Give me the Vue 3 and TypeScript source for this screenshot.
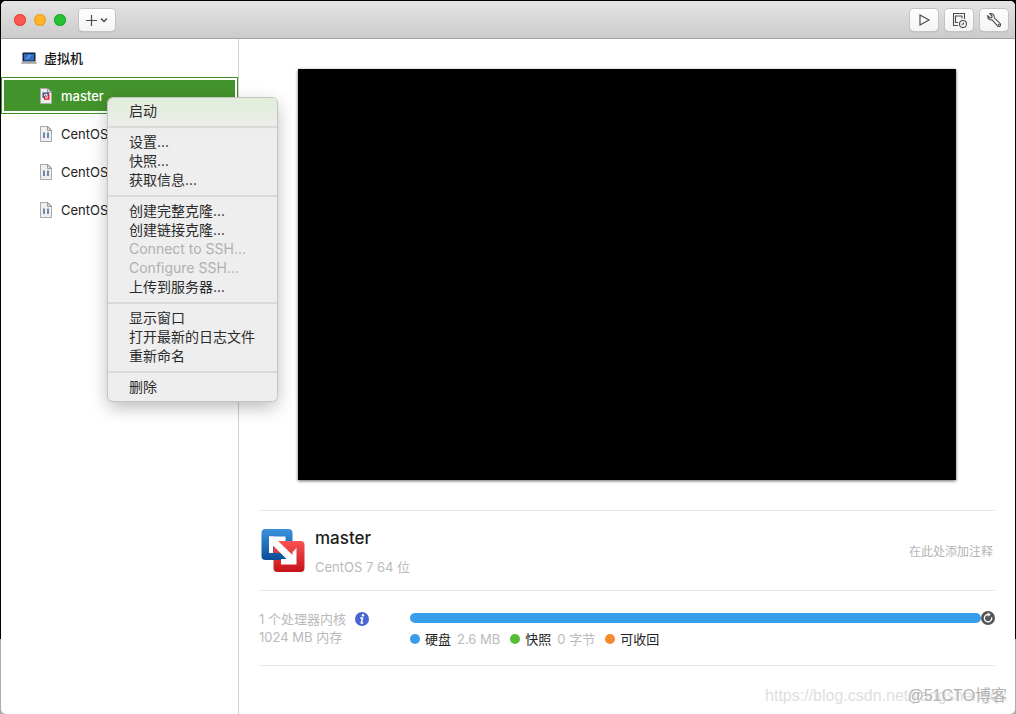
<script setup lang="ts">
import { ref } from 'vue'

interface MenuItem { label: string; disabled?: boolean }
interface Machine { name: string }
interface Legend { label: string; value: string; tone: string }

const machines: Machine[] = [
  { name: 'master' },
  { name: 'CentOS 7' },
  { name: 'CentOS 7' },
  { name: 'CentOS 7' },
]
const selected = ref(0)

const menuGroups: MenuItem[][] = [
  [{ label: '启动' }],
  [{ label: '设置...' }, { label: '快照...' }, { label: '获取信息...' }],
  [
    { label: '创建完整克隆...' },
    { label: '创建链接克隆...' },
    { label: 'Connect to SSH...', disabled: true },
    { label: 'Configure SSH...', disabled: true },
    { label: '上传到服务器...' },
  ],
  [{ label: '显示窗口' }, { label: '打开最新的日志文件' }, { label: '重新命名' }],
  [{ label: '删除' }],
]

const legend: Legend[] = [
  { label: '硬盘', value: '2.6 MB', tone: 'blue' },
  { label: '快照', value: '0 字节', tone: 'green' },
  { label: '可收回', value: '', tone: 'orange' },
]
</script>

<template>
  <div class="desktop">
    <div class="window">
      <header class="toolbar">
        <div class="lights">
          <button class="light close" aria-label="关闭"></button>
          <button class="light minimize" aria-label="最小化"></button>
          <button class="light zoom" aria-label="缩放"></button>
        </div>
        <button class="tool add" aria-label="添加">
          <svg width="26" height="14" viewBox="0 0 26 14" fill="none" stroke="#4d4d4d">
            <path d="M2 7.500h11M7.500 2v11" stroke-width="1.200" />
            <path d="M17 5.500l3 3 3-3" stroke-width="1.500" />
          </svg>
        </button>
        <div class="spacer"></div>
        <button class="tool" aria-label="启动">
          <svg width="16" height="16" viewBox="0 0 16 16" fill="none" stroke="#4d4d4d" stroke-width="1.2">
            <path d="M4 3v10l9-5z" />
          </svg>
        </button>
        <button class="tool" aria-label="快照">
          <svg width="16" height="16" viewBox="0 0 16 16" fill="none" stroke="#4d4d4d" stroke-width="1.1">
            <path d="M7 13.500H2.500V1.500h11V7" />
            <path d="M7 10.500H4.500v-6.500h6.500V6.500" />
            <circle cx="12" cy="12" r="3.500" />
            <path d="M12.500 10.500v1.700H10.500" stroke-width="1" />
          </svg>
        </button>
        <button class="tool" aria-label="设置">
          <svg width="16" height="16" viewBox="0 0 16 16" fill="none" stroke="#4d4d4d" stroke-width="1.1" stroke-linejoin="round">
            <path d="M3.700 1.600L6.100 4l-.4 1.600-1.600.4L1.700 3.700C1.400 6.300 3.100 8.300 6.100 7.900l5.200 5.800c.8.900 2 1.100 2.800.3s.6-2-.3-2.800L8.200 5.800C8.800 2.900 6.300.9 3.700 1.600z" />
            <circle cx="12.700" cy="12.600" r=".4" />
          </svg>
        </button>
      </header>

      <div class="body">
        <aside class="sidebar">
          <h2 class="library">
            <svg width="16" height="12" viewBox="0 0 16 12">
              <rect x="1.500" y=".5" width="13" height="9" rx=".6" fill="#14233f" />
              <rect x="3" y="2" width="10" height="6.500" fill="#2e6fc2" />
              <path d="M4.500 7l3-4h3l-3 4z" fill="#5c94d8" />
              <path d="M1 9.500h14l1 2.200H0z" fill="#a3a3a6" />
            </svg>
            <span>虚拟机</span>
          </h2>
          <ul class="machines">
            <li v-for="(vm, i) in machines" :key="i">
              <button class="machine" :class="{ active: selected === i }" @click="selected = i">
                <svg width="12" height="16" viewBox="0 0 12 16">
                  <path d="M.5.5h7.500l3.500 3.500v11.500H.5z" fill="#efefef" stroke="#a9a9a9" />
                  <path d="M7.500.5v4h4z" fill="#dcdcdc" stroke="#8b8b8b" stroke-width=".8" />
                  <template v-if="i === 0">
                    <path d="M5.200 9.200H3.200V5.200h5v2" fill="none" stroke="#20477e" stroke-width="1.300" />
                    <path d="M7.500 7.200h1.300v4H4.700V8.200" fill="none" stroke="#e3101f" stroke-width="1.300" />
                    <path d="M4.800 6.500l2.800 3" stroke="#a51d3a" />
                  </template>
                  <path v-else d="M4 6.500v5.500M8 6.500v5.500" stroke="#7189a8" stroke-width="2" />
                </svg>
                <span>{{ vm.name }}</span>
              </button>
            </li>
          </ul>

          <div class="menu" role="menu">
            <div v-for="(group, g) in menuGroups" :key="g" class="group" role="group">
              <button v-for="item in group" :key="item.label" class="item" role="menuitem" :disabled="item.disabled">
                {{ item.label }}
              </button>
            </div>
          </div>
        </aside>

        <main class="main">
          <div class="preview"></div>

          <section class="summary">
            <svg class="logo" width="48" height="48" viewBox="0 0 48 48">
              <defs>
                <linearGradient id="blueFill" gradientUnits="userSpaceOnUse" x1="0" y1="2" x2="0" y2="34">
                  <stop offset="0" stop-color="#3b93dc" />
                  <stop offset="1" stop-color="#0a4a96" />
                </linearGradient>
                <linearGradient id="redFill" gradientUnits="userSpaceOnUse" x1="0" y1="14" x2="0" y2="46">
                  <stop offset="0" stop-color="#fb5252" />
                  <stop offset="1" stop-color="#c41018" />
                </linearGradient>
              </defs>
              <rect x="14.500" y="14" width="31" height="31" rx="4" fill="url(#redFill)" />
              <rect x="2.500" y="2" width="31" height="31" rx="4" fill="url(#blueFill)" />
              <path fill="#fff" d="M10 9.500h16.500V14H14v12h-4z" />
              <path fill="url(#redFill)" d="M18 14h17v20z" />
              <path fill="url(#redFill)" d="M14.500 18v8H22z" />
              <path fill="#fff" d="M10 9.500h4.500L33.500 28V25l4-4v16.500H22V32h5.500L10 14.500z" />
            </svg>
            <div class="title">
              <h1>master</h1>
              <p>CentOS 7 64 位</p>
            </div>
            <button class="note">在此处添加注释</button>
          </section>

          <section class="resources">
            <div class="hardware">
              <p>1 个处理器内核
                <svg width="14" height="14" viewBox="0 0 14 14">
                  <circle cx="7" cy="7" r="7" fill="#4766d2" />
                  <circle cx="8" cy="3.300" r="1.200" fill="#fff" />
                  <path d="M5.200 6h2.300L6.300 11h2" fill="none" stroke="#fff" stroke-width="1.500" />
                </svg>
              </p>
              <p>1024 MB 内存</p>
            </div>
            <div class="storage">
              <div class="usage">
                <div class="bar"></div>
                <button class="refresh" aria-label="刷新">
                  <svg width="14" height="14" viewBox="0 0 14 14">
                    <circle cx="7" cy="7" r="7" fill="#555" />
                    <path d="M10.600 6.200A3.700 3.700 0 1 1 7.200 3.500" fill="none" stroke="#fff" stroke-width="1.300" />
                    <path d="M6.800 1.500L9.800 3.600 6.800 5.700z" fill="#fff" />
                  </svg>
                </button>
              </div>
              <ul class="legend">
                <li v-for="entry in legend" :key="entry.label">
                  <i class="dot" :class="entry.tone"></i>
                  <span>{{ entry.label }}</span>
                  <span v-if="entry.value" class="value">{{ entry.value }}</span>
                </li>
              </ul>
            </div>
          </section>
        </main>
      </div>
    </div>
    <div class="marks">
      <span class="link">https://blog.csdn.net/jiangshengqx</span>
      <span class="site">@51CTO博客</span>
    </div>
  </div>
</template>

<style>
body { margin: 0; }
</style>

<style scoped>
.desktop {
  position: relative;
  box-sizing: border-box;
  display: flex;
  min-height: 100vh;
  padding: 1px 1px 0;
  background: linear-gradient(#000 calc(100% - 75px), #adadad calc(100% - 75px));
  font-family: Inter, "Noto Sans CJK SC", sans-serif;
  font-size: 13px;
  color: #222;
}
.window {
  flex: 1;
  display: flex;
  flex-direction: column;
  min-width: 0;
  background: #fff;
  border-radius: 5px;
  overflow: hidden;
}
button {
  margin: 0;
  padding: 0;
  border: 0;
  background: none;
  font: inherit;
  color: inherit;
}
h1, h2, p, ul { margin: 0; padding: 0; font-weight: 400; list-style: none; }
svg { display: block; flex: none; }

.toolbar {
  box-sizing: border-box;
  display: flex;
  align-items: center;
  height: 38px;
  padding: 0 7px 0 13px;
  gap: 7px;
  background: linear-gradient(#e4e4e4, #cbcbcb);
  border-bottom: 1px solid #a2a2a2;
}
.lights { display: flex; gap: 8px; margin-right: 6px; }
.light { width: 12px; height: 12px; border-radius: 50%; }
.close { background: #fc5650; box-shadow: inset 0 0 0 1px #e5453f; }
.minimize { background: #fdb42b; box-shadow: inset 0 0 0 1px #e2a020; }
.zoom { background: #27c138; box-shadow: inset 0 0 0 1px #1dab2c; }
.tool {
  display: flex;
  align-items: center;
  justify-content: center;
  width: 28px;
  height: 22px;
  background: linear-gradient(#fefefe, #f4f4f4);
  border-radius: 4px;
  box-shadow: 0 0 0 1px #c3c3c3, 0 1px 1px #a5a5a5;
}
.add { width: 36px; }
.spacer { flex: 1; }

.body { flex: 1; display: flex; min-height: 0; }
.sidebar {
  position: relative;
  flex: none;
  width: 237px;
  border-right: 1px solid #cfcfcf;
}
.library {
  display: flex;
  align-items: center;
  gap: 7px;
  height: 38px;
  padding-left: 20px;
  font-size: 13px;
  line-height: 18px;
  font-weight: 500;
  color: #111;
}
.machines li { height: 38px; }
.machine {
  box-sizing: border-box;
  display: flex;
  align-items: center;
  gap: 9px;
  width: 100%;
  height: 38px;
  padding-left: 39px;
  text-align: left;
}
.machine.active {
  height: 37px;
  border: 1px solid #43932c;
  padding-left: 38px;
  background: linear-gradient(#43932c, #43932c) 2px 2px / calc(100% - 4px) calc(100% - 4px) no-repeat;
  font-weight: 500;
  color: #fff;
}

.menu {
  position: absolute;
  z-index: 2;
  left: 107px;
  top: 59px;
  width: 169px;
  border-radius: 5px;
  background: linear-gradient(#e1eddb, #ecedeb 28px, #eee 50px);
  box-shadow: 0 0 0 1px #c4c4c4, 0 6px 18px rgba(0, 0, 0, .28);
  color: #2b2b2b;
}
.group { padding: 4px 0 6px; }
.group:first-child { padding-top: 3px; }
.group:last-child { padding-bottom: 5px; }
.group + .group { border-top: 2px solid #dadada; }
.item {
  display: block;
  width: 100%;
  padding-left: 21px;
  line-height: 19px;
  font-size: 14px;
  text-align: left;
  white-space: nowrap;
}
.item:disabled { color: #b0b0b0; }

.main { flex: 1; min-width: 0; padding: 30px 20px 0; }
.preview {
  margin: 0 39px 30px;
  aspect-ratio: 658 / 411;
  background: #000;
  box-shadow: 0 1px 3px rgba(0, 0, 0, .6);
}
.summary {
  box-sizing: border-box;
  display: flex;
  align-items: center;
  height: 80px;
  border-top: 1px solid #e8e8e8;
}
.title { flex: 1; margin-left: 8px; }
.title h1 { font-size: 17px; line-height: 26px; font-weight: 500; color: #1e1e1e; }
.title p { margin-top: 6px; line-height: 20px; color: #bababa; }
.note { margin-right: 2px; font-size: 12px; color: #b5b5b5; }
.resources {
  box-sizing: border-box;
  display: flex;
  height: 76px;
  padding-top: 19px;
  border-top: 1px solid #e8e8e8;
  border-bottom: 1px solid #e8e8e8;
}
.hardware { flex: none; width: 151px; line-height: 18px; color: #bababa; }
.hardware p { display: flex; align-items: center; gap: 9px; height: 18px; white-space: nowrap; }
.storage { flex: 1; min-width: 0; }
.usage { display: flex; align-items: center; height: 16px; }
.bar { flex: 1; height: 10px; border-radius: 5px; background: #389eeb; }
.legend { display: flex; gap: 10px; margin-top: 3px; line-height: 20px; }
.legend li { display: flex; align-items: center; white-space: nowrap; }
.dot { width: 10px; height: 10px; margin-right: 5px; border-radius: 50%; }
.blue { background: #389eeb; }
.green { background: #55bd38; }
.orange { background: #f58a31; }
.value { margin-left: 6px; color: #bababa; }

.marks {
  position: absolute;
  right: 9px;
  bottom: 6px;
  display: grid;
  justify-items: end;
  font-family: "Liberation Sans", "Noto Sans CJK SC", sans-serif;
  font-size: 16px;
  line-height: 24px;
  white-space: nowrap;
}
.marks span { grid-area: 1 / 1; }
.link { color: #dedede; }
.site { color: #b4b4b4; }
</style>
